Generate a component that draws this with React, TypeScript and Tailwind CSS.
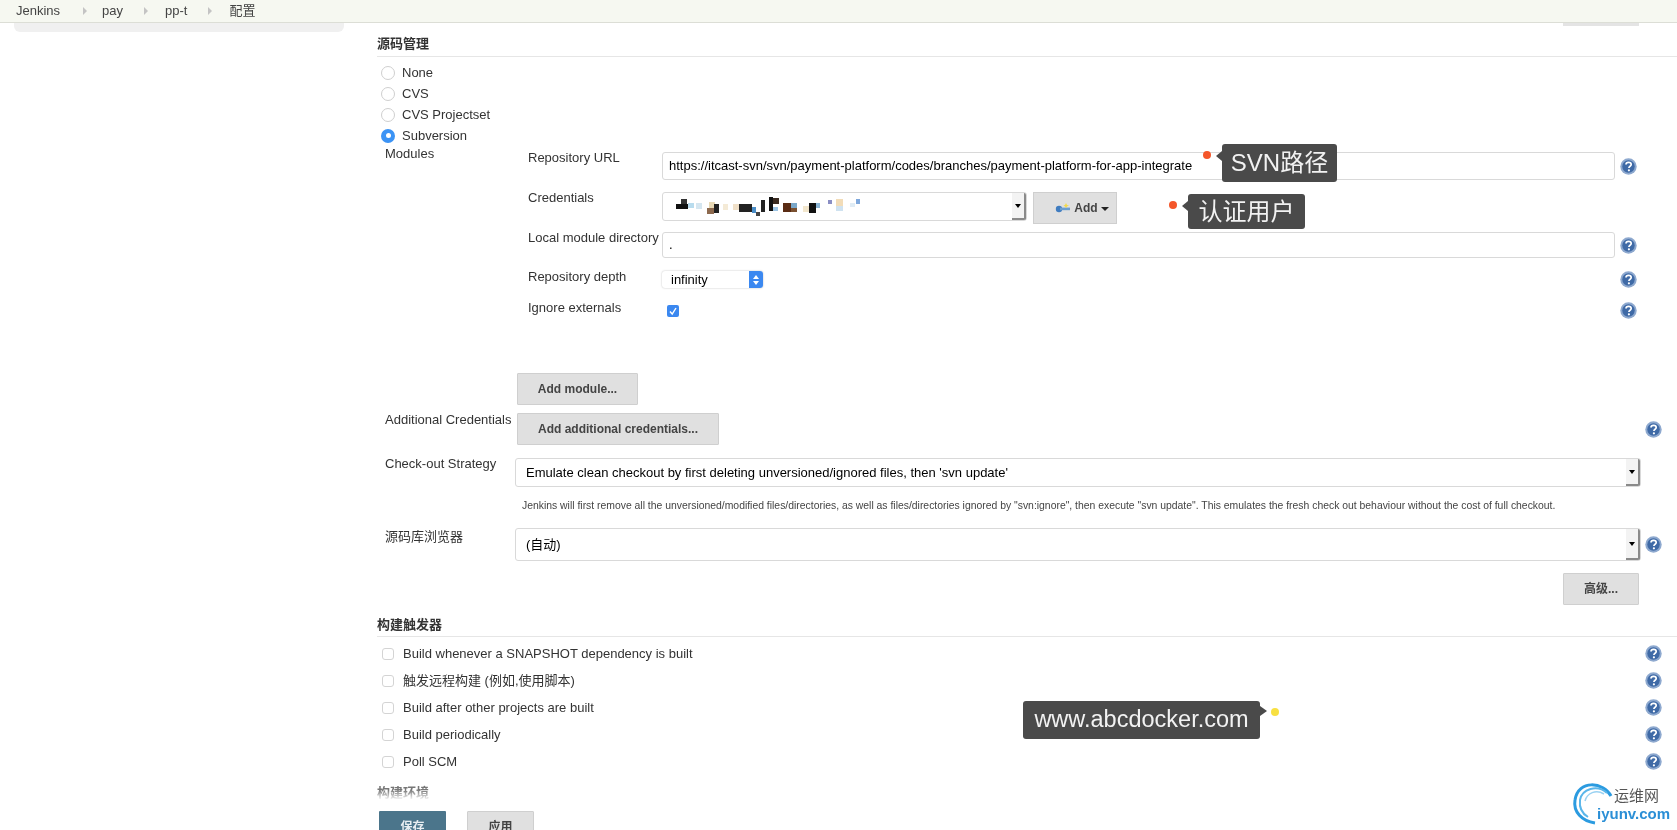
import React from "react";

const FONT = { fontFamily: '"Liberation Sans","Noto Sans CJK SC",sans-serif' };

function Help() {
  return (
    <svg width="17" height="17" viewBox="0 0 17 17" className="block shrink-0 self-center">
      <circle cx="8.5" cy="8.5" r="8.2" fill="#8ea9cf" />
      <circle cx="8.5" cy="8.5" r="6.2" fill="#3f6aa6" />
      <path d="M6 6.6C6 5.2 7.1 4.3 8.6 4.3C10.1 4.3 11.2 5.2 11.2 6.5C11.2 8.3 8.9 8.2 8.9 10" fill="none" stroke="#fff" strokeWidth="1.7" />
      <circle cx="8.9" cy="12.3" r="1.1" fill="#fff" />
    </svg>
  );
}

function Radio({ checked, label }: { checked?: boolean; label: string }) {
  return (
    <div className="flex h-[21px] items-center pl-[4px]">
      {checked ? (
        <span className="flex h-[14px] w-[14px] items-center justify-center rounded-full bg-[#3b93f5]">
          <span className="h-[5px] w-[5px] rounded-full bg-white" />
        </span>
      ) : (
        <span className="h-[14px] w-[14px] rounded-full border border-[#cfcfcf] bg-white" />
      )}
      <span className="ml-[7px]">{label}</span>
    </div>
  );
}

function Arrow() {
  return (
    <span className="flex w-[14px] items-center justify-center rounded-r-[2px] border-b-2 border-r-2 border-[#8a8a8a] bg-[#f3f3f3]">
      <span className="h-0 w-0 border-x-[3px] border-t-[4px] border-x-transparent border-t-black" />
    </span>
  );
}

function Btn({ className, children }: { className: string; children: React.ReactNode }) {
  return (
    <div className={`flex h-[32px] shrink-0 items-center justify-center rounded-[1px] border border-[#cfcfcf] bg-[#e0e0e0] text-[12px] font-bold text-[#444] ${className}`}>
      {children}
    </div>
  );
}

function Mosaic() {
  const r: [number, number, number, number, string][] = [
    [5, 5, 6, 5, "#333"], [0, 10, 12, 5, "#111"], [12, 9, 6, 5, "#b9dcee"], [20, 9, 6, 6, "#d5e6f0"],
    [33, 8, 6, 6, "#e8d9b5"], [31, 14, 7, 6, "#8d6a4f"], [38, 10, 5, 9, "#222"], [47, 10, 5, 6, "#f4ead6"],
    [57, 10, 6, 6, "#f0e0c8"], [63, 10, 13, 8, "#222"], [76, 13, 4, 6, "#4a8ec8"], [80, 18, 4, 4, "#444"],
    [85, 6, 4, 12, "#222"], [93, 3, 4, 14, "#111"], [97, 4, 6, 6, "#3a2a20"], [97, 13, 5, 4, "#9cc4e4"],
    [107, 9, 8, 9, "#5a2c14"], [115, 9, 6, 5, "#79a7c9"], [115, 14, 6, 4, "#7a5030"], [127, 12, 6, 6, "#f2e6cc"],
    [133, 9, 7, 10, "#111"], [140, 9, 4, 5, "#8ab4d4"], [152, 6, 4, 4, "#8a8ec4"], [160, 5, 7, 7, "#f2dcb8"], [160, 12, 7, 5, "#cfe2f0"],
    [174, 9, 5, 4, "#e0ecf5"], [180, 5, 4, 5, "#7fa8dc"],
  ];
  return (
    <svg width="190" height="24" viewBox="0 0 190 24" className="ml-[13px] mt-[1px] block">
      {r.map((a, i) => (
        <rect key={i} x={a[0]} y={a[1]} width={a[2]} height={a[3]} fill={a[4]} />
      ))}
    </svg>
  );
}

function Check({ label }: { label: string }) {
  return (
    <div className="flex h-[27px] items-center pl-[5px] pr-[15px]">
      <span className="h-[12px] w-[12px] rounded-[3px] border border-[#d4d4d4] bg-white" />
      <span className="ml-[9px] flex-1">{label}</span>
      <Help />
    </div>
  );
}

function Heading({ className, children }: { className: string; children: React.ReactNode }) {
  return <div className={`flex items-end border-b border-[#e6e6e6] font-bold text-[#333] ${className}`}>{children}</div>;
}

const Tip = ({ className, children }: { className: string; children: React.ReactNode }) => (
  <div className={`absolute flex items-center justify-center rounded-[3px] bg-[#4a4a4a] text-[#f2f2f2] ${className}`}>{children}</div>
);

export default function App() {
  return (
    <div className="relative h-[830px] w-[1677px] overflow-hidden bg-white text-[13px] text-[#333] blur-[0.35px]" style={FONT}>
      <header className="flex h-[23px] items-center border-b border-[#dcded6] bg-[#f6f8f1] pl-[16px] text-[#444]">
        {["Jenkins", "pay", "pp-t", "配置"].map((t, i) => (
          <React.Fragment key={t}>
            {i > 0 && <span className={`h-0 w-0 border-y-[4px] border-l-[4px] border-y-transparent border-l-[#c4c4c4] ${i === 1 ? "ml-[23px] mr-[15px]" : "ml-[21px] mr-[17px]"}`} />}
            <span>{t}</span>
          </React.Fragment>
        ))}
      </header>
      <div className="flex">
        <div className="ml-[14px] h-[9px] w-[330px] rounded-b-[6px] bg-[#f0f0f0]" />
        <main className="ml-[33px] w-[1300px]">
          <div className="flex justify-end">
            <div className="mr-[38px] h-[3px] w-[76px] bg-[#e4e4e4]" />
          </div>
          <Heading className="h-[31px] pb-[3px]">源码管理</Heading>
          <div className="mt-[5px]">
            <Radio label="None" />
            <Radio label="CVS" />
            <Radio label="CVS Projectset" />
            <Radio checked label="Subversion" />
          </div>
          <div className="mt-px flex">
            <div className="w-[151px] pl-[8px] leading-[13px]">Modules</div>
            <div className="mt-[5px] flex flex-col">
              <div className="flex h-[28px]">
                <div className="-mt-px w-[134px] leading-[13px]">Repository URL</div>
                <div className="flex w-[953px] items-center rounded-[3px] border border-[#d9d9d9] pl-[6px] text-[13px] text-black">
                  https://itcast-svn/svn/payment-platform/codes/branches/payment-platform-for-app-integrate
                </div>
                <div className="ml-[5px] flex"><Help /></div>
              </div>
              <div className="mt-[12px] flex h-[32px]">
                <div className="-mt-px w-[134px] leading-[13px]">Credentials</div>
                <div className="flex h-[29px] w-[365px] justify-between rounded-[3px] border border-[#d9d9d9]">
                  <Mosaic />
                  <Arrow />
                </div>
                <div className="ml-[6px] flex h-[32px] w-[84px] items-center justify-center border border-[#cfcfcf] bg-[#e0e0e0] pl-[14px] text-[12px] font-bold text-[#444]">
                  <svg width="16" height="12" viewBox="0 0 16 12" className="mr-[3px]">
                    <circle cx="4" cy="7" r="3.2" fill="#3f7cc0" />
                    <rect x="5" y="5.6" width="10" height="2.6" fill="#6b9ed0" />
                    <path d="M11 1 L12 3 L14 3.6 L12 4.4 L11 6 L10 4.4 L8.4 3.6 L10 3 Z" fill="#f2d94a" />
                  </svg>
                  Add
                  <span className="ml-[3px] mt-[1px] h-0 w-0 border-x-[4px] border-t-[4px] border-x-transparent border-t-[#222]" />
                </div>
              </div>
              <div className="mt-[8px] flex h-[26px]">
                <div className="-mt-px w-[134px] leading-[13px]">Local module directory</div>
                <div className="flex w-[953px] items-center rounded-[3px] border border-[#d9d9d9] pl-[6px] text-black">.</div>
                <div className="ml-[5px] flex"><Help /></div>
              </div>
              <div className="mt-[13px] flex h-[17px]">
                <div className="-mt-px w-[134px] leading-[13px]">Repository depth</div>
                <div className="flex w-[953px]">
                  <div className="flex w-[101px] justify-between overflow-hidden rounded-[3px] bg-white shadow-[0_0_2px_#bbb]">
                    <span className="pl-[9px] text-[13px] leading-[17px] text-black">infinity</span>
                    <span className="flex w-[14px] flex-col items-center justify-center gap-[2px] bg-[#3b88f0]">
                      <span className="h-0 w-0 border-x-[3px] border-b-[4px] border-x-transparent border-b-white" />
                      <span className="h-0 w-0 border-x-[3px] border-t-[4px] border-x-transparent border-t-white" />
                    </span>
                  </div>
                </div>
                <div className="ml-[5px] flex"><Help /></div>
              </div>
              <div className="mt-[14px] flex h-[17px]">
                <div className="-mt-px w-[134px] leading-[13px]">Ignore externals</div>
                <div className="w-[953px] pl-[5px] pt-[3px]">
                  <span className="flex h-[12px] w-[12px] items-center justify-center rounded-[2px] bg-[#3b88f0]">
                    <svg width="10" height="10" viewBox="0 0 10 10"><path d="M2 5.5 L4.2 8 L8 2" fill="none" stroke="#fff" strokeWidth="1.4" /></svg>
                  </span>
                </div>
                <div className="ml-[5px] flex"><Help /></div>
              </div>
            </div>
          </div>
          <Btn className="ml-[140px] mt-[54px] w-[121px]">Add module...</Btn>
          <div className="mt-[8px] flex h-[32px] pr-[15px]">
            <div className="ml-[8px] w-[132px] whitespace-nowrap leading-[13px]">Additional Credentials</div>
            <Btn className="w-[202px]">Add additional credentials...</Btn>
            <div className="ml-auto flex"><Help /></div>
          </div>
          <div className="mt-[13px] flex h-[29px]">
            <div className="ml-[8px] w-[130px] leading-[11px]">Check-out Strategy</div>
            <div className="flex w-[1126px] justify-between rounded-[3px] border border-[#d9d9d9] text-black">
              <span className="pl-[10px] leading-[27px]">Emulate clean checkout by first deleting unversioned/ignored files, then 'svn update'</span>
              <Arrow />
            </div>
          </div>
          <div className="ml-[145px] mt-[12px] text-[10.4px] leading-[14px] text-[#444]">
            Jenkins will first remove all the unversioned/modified files/directories, as well as files/directories ignored by "svn:ignore", then execute "svn update". This emulates the fresh check out behaviour without the cost of full checkout.
          </div>
          <div className="mt-[15px] flex h-[33px]">
            <div className="ml-[8px] w-[130px] -mt-px">源码库浏览器</div>
            <div className="flex w-[1126px] justify-between rounded-[3px] border border-[#d9d9d9] text-black">
              <span className="pl-[10px] leading-[31px]">(自动)</span>
              <Arrow />
            </div>
            <div className="ml-[4px] flex"><Help /></div>
          </div>
          <div className="mt-[12px] flex justify-end pr-[38px]">
            <Btn className="w-[76px]">高级...</Btn>
          </div>
          <Heading className="h-[32px] pb-[2px]">构建触发器</Heading>
          <div className="mt-[3px]">
            <Check label="Build whenever a SNAPSHOT dependency is built" />
            <Check label="触发远程构建 (例如,使用脚本)" />
            <Check label="Build after other projects are built" />
            <Check label="Build periodically" />
            <Check label="Poll SCM" />
          </div>
          <div className="mt-[11px] h-[14px] font-bold leading-[14px] text-[#777]">构建环境</div>
          <div className="ml-[2px] mt-[11px] flex gap-[21px]">
            <div className="flex h-[32px] w-[67px] items-center justify-center rounded-[1px] bg-[#4b758b] text-[12px] font-bold text-[#e8eef2]">保存</div>
            <Btn className="w-[67px]">应用</Btn>
          </div>
        </main>
      </div>

      <div className="absolute left-0 top-[790px] h-[10px] w-full bg-gradient-to-b from-white/0 to-white" />

      <span className="absolute left-[1203px] top-[151px] h-[8px] w-[8px] rounded-full bg-[#f4562a]" />
      <Tip className="left-[1222px] top-[144px] h-[38px] w-[115px] text-[24px]">
        <span className="absolute left-[-6px] top-[7px] h-0 w-0 border-y-[5px] border-r-[6px] border-y-transparent border-r-[#4a4a4a]" />
        SVN路径
      </Tip>
      <span className="absolute left-[1169px] top-[201px] h-[8px] w-[8px] rounded-full bg-[#f4562a]" />
      <Tip className="left-[1188px] top-[194px] h-[35px] w-[117px] text-[24px]">
        <span className="absolute left-[-6px] top-[7px] h-0 w-0 border-y-[5px] border-r-[6px] border-y-transparent border-r-[#4a4a4a]" />
        认证用户
      </Tip>
      <Tip className="left-[1023px] top-[701px] h-[38px] w-[237px] text-[23.5px]">
        <span className="absolute right-[-7px] top-[5px] h-0 w-0 border-y-[5px] border-l-[7px] border-y-transparent border-l-[#4a4a4a]" />
        www.abcdocker.com
      </Tip>
      <span className="absolute left-[1271px] top-[708px] h-[8px] w-[8px] rounded-full bg-[#f8e042]" />

      <div className="absolute left-[1570px] top-[780px] h-[50px] w-[107px]">
        <svg width="44" height="46" viewBox="0 0 44 46" className="absolute left-0 top-0">
          <path d="M41 16 C34 2 8 -1 5 20 C3 32 12 41 25 43" fill="none" stroke="#2b9be0" strokeWidth="3" />
          <path d="M37 13 C27 4 12 9 10 20 C9 28 13 34 18 37" fill="none" stroke="#5ab6ea" strokeWidth="2" />
          <path d="M34 14 C26 9 17 13 15 21" fill="none" stroke="#9ad2f2" strokeWidth="1.5" />
        </svg>
        <span className="absolute left-[44px] top-[7px] text-[15px] leading-[18px] text-[#555]">运维网</span>
        <span className="absolute left-[27px] top-[24px] text-[15px] font-bold leading-[20px] text-[#2b8fd6]">iyunv.com</span>
      </div>
    </div>
  );
}
